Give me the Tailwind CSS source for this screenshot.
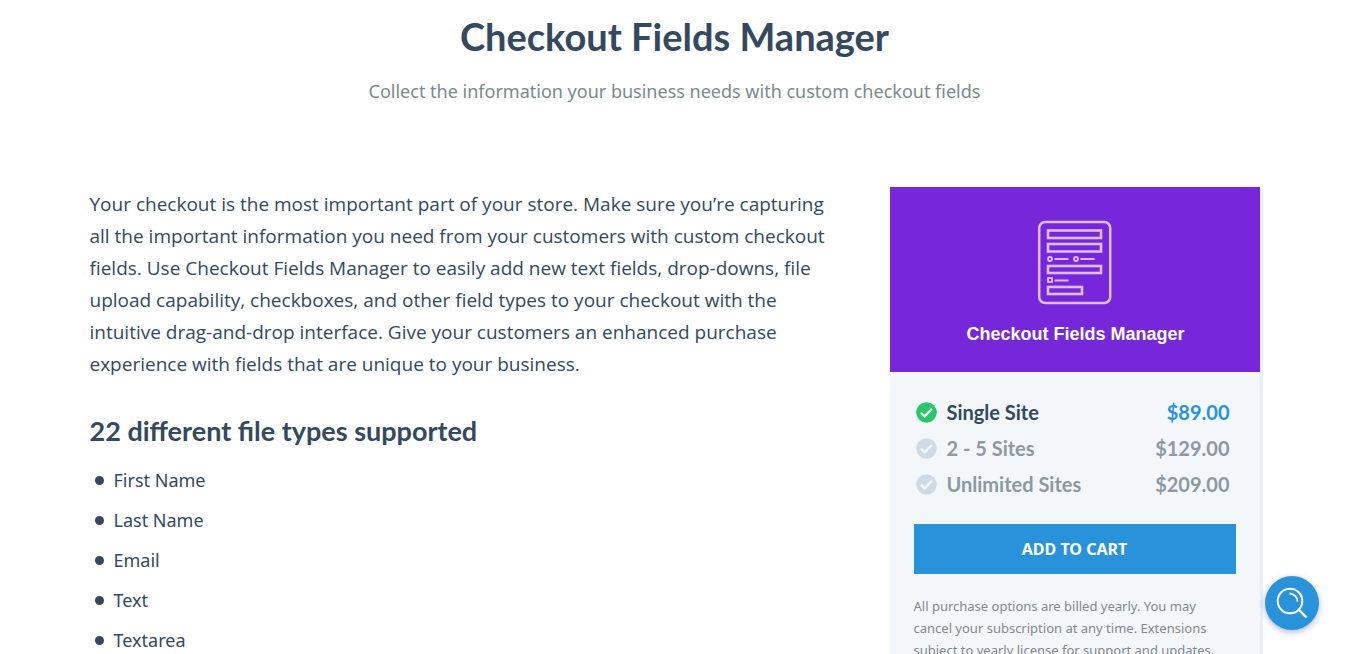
<!DOCTYPE html>
<html lang="en">

<head>
  <meta charset="UTF-8">
  <meta name="viewport" content="width=device-width, initial-scale=1.0">
  <title>Checkout Fields Manager</title>
  <script src="https://cdn.jsdelivr.net/npm/@tailwindcss/browser@4"></script>
</head>

<body class="h-screen overflow-hidden bg-white font-['Noto_Sans',sans-serif] text-[#34495e]">
  <header class="px-4 pt-[11px] text-center">
    <h1 class="text-[38px] leading-[50px] font-bold font-['Lato',sans-serif]">Checkout Fields Manager</h1>
    <p class="mt-4 text-[18px] leading-[28px] text-[#7b8a8b]">Collect the information your business needs with custom checkout fields</p>
  </header>

  <div class="mx-auto mt-[82px] flex max-w-[1170px] items-start justify-between gap-[60px]">
    <main class="min-w-0 flex-1 pt-px">
      <p class="text-[19px] leading-8 font-['Open_Sans',sans-serif]">Your checkout is the most important part of your store. Make sure you’re capturing all the important information you need from your customers with custom checkout fields. Use Checkout Fields Manager to easily add new text fields, drop-downs, file upload capability, checkboxes, and other field types to your checkout with the intuitive drag-and-drop interface. Give your customers an enhanced purchase experience with fields that are unique to your business.</p>
      <h2 class="mt-8 text-[27px] leading-[38px] font-bold font-['Lato',sans-serif]">22 different file types supported</h2>
      <ul class="mt-[18px] text-[18px] leading-6">
        <li class="mb-4 flex items-center gap-[10px] pl-[5px]"><span class="size-[9px] rounded-full bg-[#34495e]"></span>First Name</li>
        <li class="mb-4 flex items-center gap-[10px] pl-[5px]"><span class="size-[9px] rounded-full bg-[#34495e]"></span>Last Name</li>
        <li class="mb-4 flex items-center gap-[10px] pl-[5px]"><span class="size-[9px] rounded-full bg-[#34495e]"></span>Email</li>
        <li class="mb-4 flex items-center gap-[10px] pl-[5px]"><span class="size-[9px] rounded-full bg-[#34495e]"></span>Text</li>
        <li class="mb-4 flex items-center gap-[10px] pl-[5px]"><span class="size-[9px] rounded-full bg-[#34495e]"></span>Textarea</li>
      </ul>
    </main>

    <aside class="w-[370px] shrink-0 bg-[#f3f7fa] shadow-[3px_3px_0_#e9eff7]">
      <div class="flex h-[185px] flex-col items-center bg-[#7627d9] pt-[33px] text-white">
        <svg class="h-[85px] w-[75px]" viewBox="0 0 75 85" fill="none" stroke="#dfbdf9" aria-hidden="true">
          <rect x="2.2" y="2" width="71" height="81" rx="6" stroke-width="2.5" />
          <g stroke-width="2.6">
            <rect x="11" y="10.5" width="53" height="7.5" />
            <rect x="11" y="24" width="53" height="7.5" />
            <rect x="11" y="46" width="53" height="7" />
            <rect x="11" y="67" width="34" height="7" />
          </g>
          <g stroke-width="1.8">
            <circle cx="13" cy="39" r="2" />
            <circle cx="39" cy="39" r="2" />
            <rect x="11" y="58" width="4" height="4" />
            <path d="M17.500 39h14M43.500 39h14M17.500 60.500h14" />
          </g>
        </svg>
        <div class="mt-[17px] pl-[2px] font-['Liberation_Sans',Arial,sans-serif] text-[18px] leading-6 font-bold">Checkout Fields Manager</div>
      </div>

      <div class="px-6 pt-[22px] pb-6">
        <div role="radiogroup" aria-label="License" class="pr-[6px] pl-[2px] text-[20px] leading-9 font-bold text-[#8d98a3] font-['Lato',sans-serif]">
          <label class="flex items-center has-checked:text-[#34495e]">
            <input type="radio" name="license" value="single" checked class="peer size-0 appearance-none">
            <svg class="mr-[10px] size-[21px] text-[#d0dae5] peer-checked:text-[#28c76a]" viewBox="0 0 21 21" aria-hidden="true">
              <circle cx="10.5" cy="10.5" r="10.3" fill="currentColor" />
              <path d="M5 10.8l3.7 3.6 7.2-7.6" fill="none" stroke="#f3f7fa" stroke-width="2.3" />
            </svg>
            Single Site
            <span class="ml-auto text-[#2893da]">$89.00</span>
          </label>
          <label class="flex items-center has-checked:text-[#34495e]">
            <input type="radio" name="license" value="five" class="peer size-0 appearance-none">
            <svg class="mr-[10px] size-[21px] text-[#d0dae5] peer-checked:text-[#28c76a]" viewBox="0 0 21 21" aria-hidden="true">
              <circle cx="10.5" cy="10.5" r="10.3" fill="currentColor" />
              <path d="M5 10.8l3.7 3.6 7.2-7.6" fill="none" stroke="#f3f7fa" stroke-width="2.3" />
            </svg>
            2 - 5 Sites
            <span class="ml-auto">$129.00</span>
          </label>
          <label class="flex items-center has-checked:text-[#34495e]">
            <input type="radio" name="license" value="unlimited" class="peer size-0 appearance-none">
            <svg class="mr-[10px] size-[21px] text-[#d0dae5] peer-checked:text-[#28c76a]" viewBox="0 0 21 21" aria-hidden="true">
              <circle cx="10.5" cy="10.5" r="10.3" fill="currentColor" />
              <path d="M5 10.8l3.7 3.6 7.2-7.6" fill="none" stroke="#f3f7fa" stroke-width="2.3" />
            </svg>
            Unlimited Sites
            <span class="ml-auto">$209.00</span>
          </label>
        </div>
        <button type="button" class="mt-[22px] h-[50px] w-full bg-[#2893da] text-[16px] font-bold text-white">ADD TO CART</button>
        <p class="mt-[21px] text-[13px] leading-[22px] text-[#7f898f]">All purchase options are billed yearly. You may cancel your subscription at any time. Extensions subject to yearly license for support and updates.</p>
      </div>
    </aside>
  </div>

  <button type="button" aria-label="Search" class="fixed right-[30px] bottom-6 flex size-[54px] items-center justify-center rounded-full bg-[#2893da] shadow-[0_2px_6px_rgba(30,40,110,0.35)]">
    <svg class="size-[54px]" viewBox="0 0 54 54" fill="none" stroke="#fff" stroke-width="2" aria-hidden="true">
      <circle cx="25" cy="25" r="12.3" />
      <path d="M24.5 17.5a8 8 0 0 1 8 8" />
      <path d="M33.5 33.5l8 8" stroke-width="2.4" />
    </svg>
  </button>
</body>

</html>
